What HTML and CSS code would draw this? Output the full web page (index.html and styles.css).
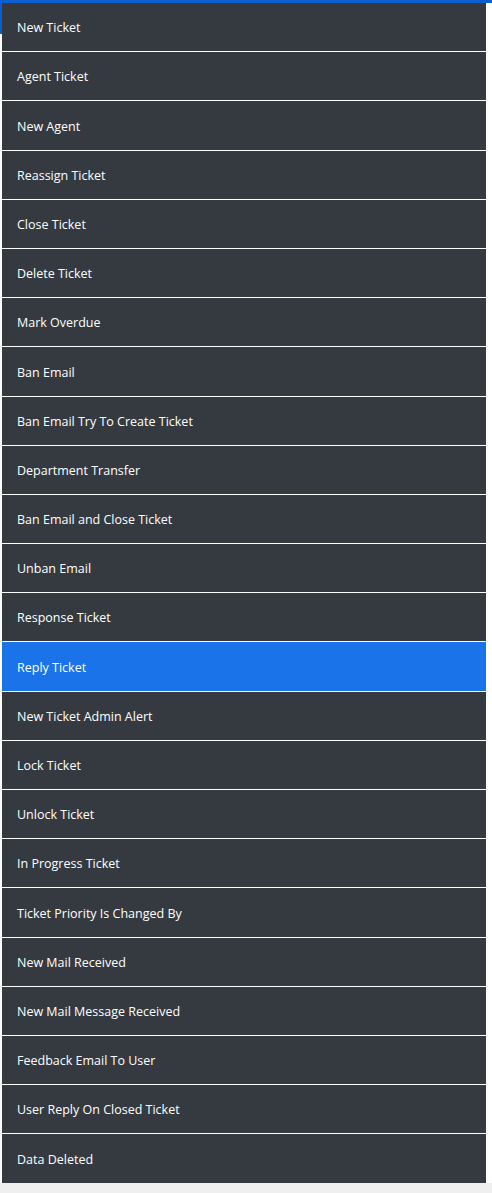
FILE: index.html
```html
<!DOCTYPE html>
<html lang="en">
<head>
<meta charset="utf-8">
<title>Ticket Templates</title>
<link rel="stylesheet" href="styles.css">
</head>
<body>
<div class="topbar"></div>
<div class="layout">
  <div class="side-mark"></div>
  <ul class="menu">
    <li class="item">New Ticket</li>
    <li class="item">Agent Ticket</li>
    <li class="item">New Agent</li>
    <li class="item">Reassign Ticket</li>
    <li class="item">Close Ticket</li>
    <li class="item">Delete Ticket</li>
    <li class="item">Mark Overdue</li>
    <li class="item">Ban Email</li>
    <li class="item">Ban Email Try To Create Ticket</li>
    <li class="item">Department Transfer</li>
    <li class="item">Ban Email and Close Ticket</li>
    <li class="item">Unban Email</li>
    <li class="item">Response Ticket</li>
    <li class="item active">Reply Ticket</li>
    <li class="item">New Ticket Admin Alert</li>
    <li class="item">Lock Ticket</li>
    <li class="item">Unlock Ticket</li>
    <li class="item">In Progress Ticket</li>
    <li class="item">Ticket Priority Is Changed By</li>
    <li class="item">New Mail Received</li>
    <li class="item">New Mail Message Received</li>
    <li class="item">Feedback Email To User</li>
    <li class="item">User Reply On Closed Ticket</li>
    <li class="item">Data Deleted</li>
  </ul>
</div>
</body>
</html>
```
FILE: styles.css
```css
html, body {
  margin: 0;
  padding: 0;
}
body {
  background: #efefef;
  font-family: "Open Sans", "Noto Sans", sans-serif;
}
.topbar {
  height: 3px;
  background: #0d5fcf;
}
.layout {
  display: flex;
  align-items: flex-start;
  background: #ffffff;
}
.side-mark {
  width: 2px;
  height: 31px;
  background: #0d5fcf;
  flex: none;
}
.menu {
  list-style: none;
  margin: 0 6px 0 0;
  padding: 0;
  flex: 1;
}
.item {
  background: #343a40;
  color: #ffffff;
  font-size: 12.5px;
  line-height: 20.2px;
  padding: 15.2px 15px 12.8px;
  border-bottom: 1px solid #ffffff;
}
.item:last-child {
  border-bottom: none;
}
.item.active {
  background: #1a73e8;
}
```
